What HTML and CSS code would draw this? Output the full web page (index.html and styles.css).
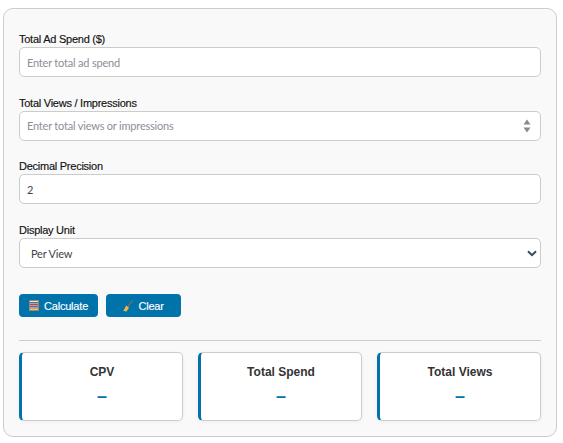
FILE: index.html
```html
<!DOCTYPE html>
<html>
	<head>
		<meta charset="utf-8">
		<title>CPV Calculator</title>
		<link rel="stylesheet" href="styles.css">
	</head>
	<body>
		<div class="calc">
			<div class="field">
				<label class="label" for="spend">Total Ad Spend ($)</label>
				<input class="control" id="spend" type="text" placeholder="Enter total ad spend">
			</div>
			<div class="field">
				<label class="label" for="views">Total Views / Impressions</label>
				<div class="wrap">
					<input class="control" id="views" type="text" placeholder="Enter total views or impressions">
					<svg class="spin" width="8" height="14" viewBox="0 0 8 14">
						<path d="M4 0.5 L7.5 5.5 H0.5 Z" fill="#8a8a8a"/>
						<path d="M0.5 8.5 H7.5 L4 13.5 Z" fill="#8a8a8a"/>
					</svg>
				</div>
			</div>
			<div class="field">
				<label class="label" for="precision">Decimal Precision</label>
				<input class="control value" id="precision" type="text" value="2">
			</div>
			<div class="field">
				<label class="label" for="unit">Display Unit</label>
				<div class="wrap">
					<select class="control value pick" id="unit">
						<option>Per View</option>
						<option>Per 1000 Views</option>
					</select>
					<svg class="chev" width="10" height="7" viewBox="0 0 10 7">
						<path d="M1 1.2 L5 5.2 L9 1.2" fill="none" stroke="#3b4a5f" stroke-width="2"/>
					</svg>
				</div>
			</div>

			<!-- buttons -->
			<div class="actions">
				<button class="btn" type="button">
					<svg width="10" height="11" viewBox="0 0 10 11">
						<rect width="10" height="11" fill="#a5846a"/>
						<rect x="1" y="1" width="8" height="9" fill="#dfe5ea"/>
						<rect x="1" y="2" width="8" height="1.5" fill="#5a6f86"/>
						<rect x="1" y="4" width="8" height="1.5" fill="#b5455a"/>
						<rect x="1" y="6" width="8" height="1.5" fill="#5a6f86"/>
						<rect x="1" y="8" width="8" height="1.5" fill="#d9a441"/>
					</svg>
					Calculate
				</button>
				<button class="btn" type="button">
					<svg width="10" height="12" viewBox="0 0 10 12">
						<path d="M4.5 7 L9.5 0.5" stroke="#9a6a3c" stroke-width="1.2"/>
						<path d="M3.2 5.5 L6 7.8 L3.5 11.5 L0.3 11 Z" fill="#e8b84a"/>
					</svg>
					Clear
				</button>
			</div>

			<hr class="rule">

			<!-- results -->
			<div class="results">
				<div class="card">
					<div class="card-title">CPV</div>
					<div class="card-value">–</div>
				</div>
				<div class="card">
					<div class="card-title">Total Spend</div>
					<div class="card-value">–</div>
				</div>
				<div class="card">
					<div class="card-title">Total Views</div>
					<div class="card-value">–</div>
				</div>
			</div>
		</div>
	</body>
</html>
```

FILE: styles.css
```css
* {
    box-sizing: border-box;
    margin: 0;
    padding: 0;
}

body {
    padding: 8px 6px 6px 3px;
    background: #fff;
    font-family: "Liberation Sans", Arial, sans-serif;
}

.calc {
    padding: 22px 15px 15px;
    border: 1px solid #ccc;
    border-radius: 10px;
    background: #f9f9f9;
}

.field {
    margin-bottom: 17.5px;
}

.label {
    display: block;
    height: 16px;
    color: #111;
    font-size: 11px;
    letter-spacing: -0.25px;
    line-height: 16px;
    -webkit-text-stroke: 0.15px #111;
}

.wrap {
    position: relative;
}

.control {
    display: block;
    width: 100%;
    height: 30px;
    padding: 0 7px;
    border: 1px solid #ccc;
    border-radius: 5px;
    background: #fff;
    outline: none;
    font-family: Lato, sans-serif;
    font-size: 11px;
    letter-spacing: -0.2px;
}

.control::placeholder {
    color: #8e8e99;
    opacity: 1;
}

.value {
    color: #444;
}

.pick {
    padding: 1px 0 0 11px;
    appearance: none;
}

.spin {
    position: absolute;
    top: 8px;
    right: 10px;
}

.chev {
    position: absolute;
    top: 12px;
    right: 4px;
}

.actions {
    display: flex;
    gap: 8px;
    margin-top: 26.5px;
}

.btn {
    display: flex;
    align-items: center;
    justify-content: center;
    gap: 5px;
    min-width: 75px;
    height: 23px;
    padding: 0 10px;
    border: none;
    border-radius: 4px;
    background: #0073aa;
    color: #fff;
    font-family: "Liberation Sans", Arial, sans-serif;
    font-size: 11px;
    letter-spacing: -0.2px;
    -webkit-text-stroke: 0.15px #fff;
}

.rule {
    margin: 23px 0 11px;
    border: none;
    border-top: 1px solid #ccc;
}

.results {
    display: grid;
    grid-template-columns: repeat(3, 1fr);
    gap: 15px;
}

.card {
    height: 69px;
    padding-top: 12px;
    border: 1px solid #ccc;
    border-left: 3px solid #0073aa;
    border-radius: 5px;
    background: #fff;
    box-shadow: 0 1px 4px rgba(0, 0, 0, 0.05);
    text-align: center;
}

.card-title {
    color: #333;
    font-size: 12px;
    font-weight: bold;
    line-height: 14px;
}

.card-value {
    margin-top: 5px;
    color: #0073aa;
    font-size: 18px;
    font-weight: bold;
    line-height: 24px;
}
```
